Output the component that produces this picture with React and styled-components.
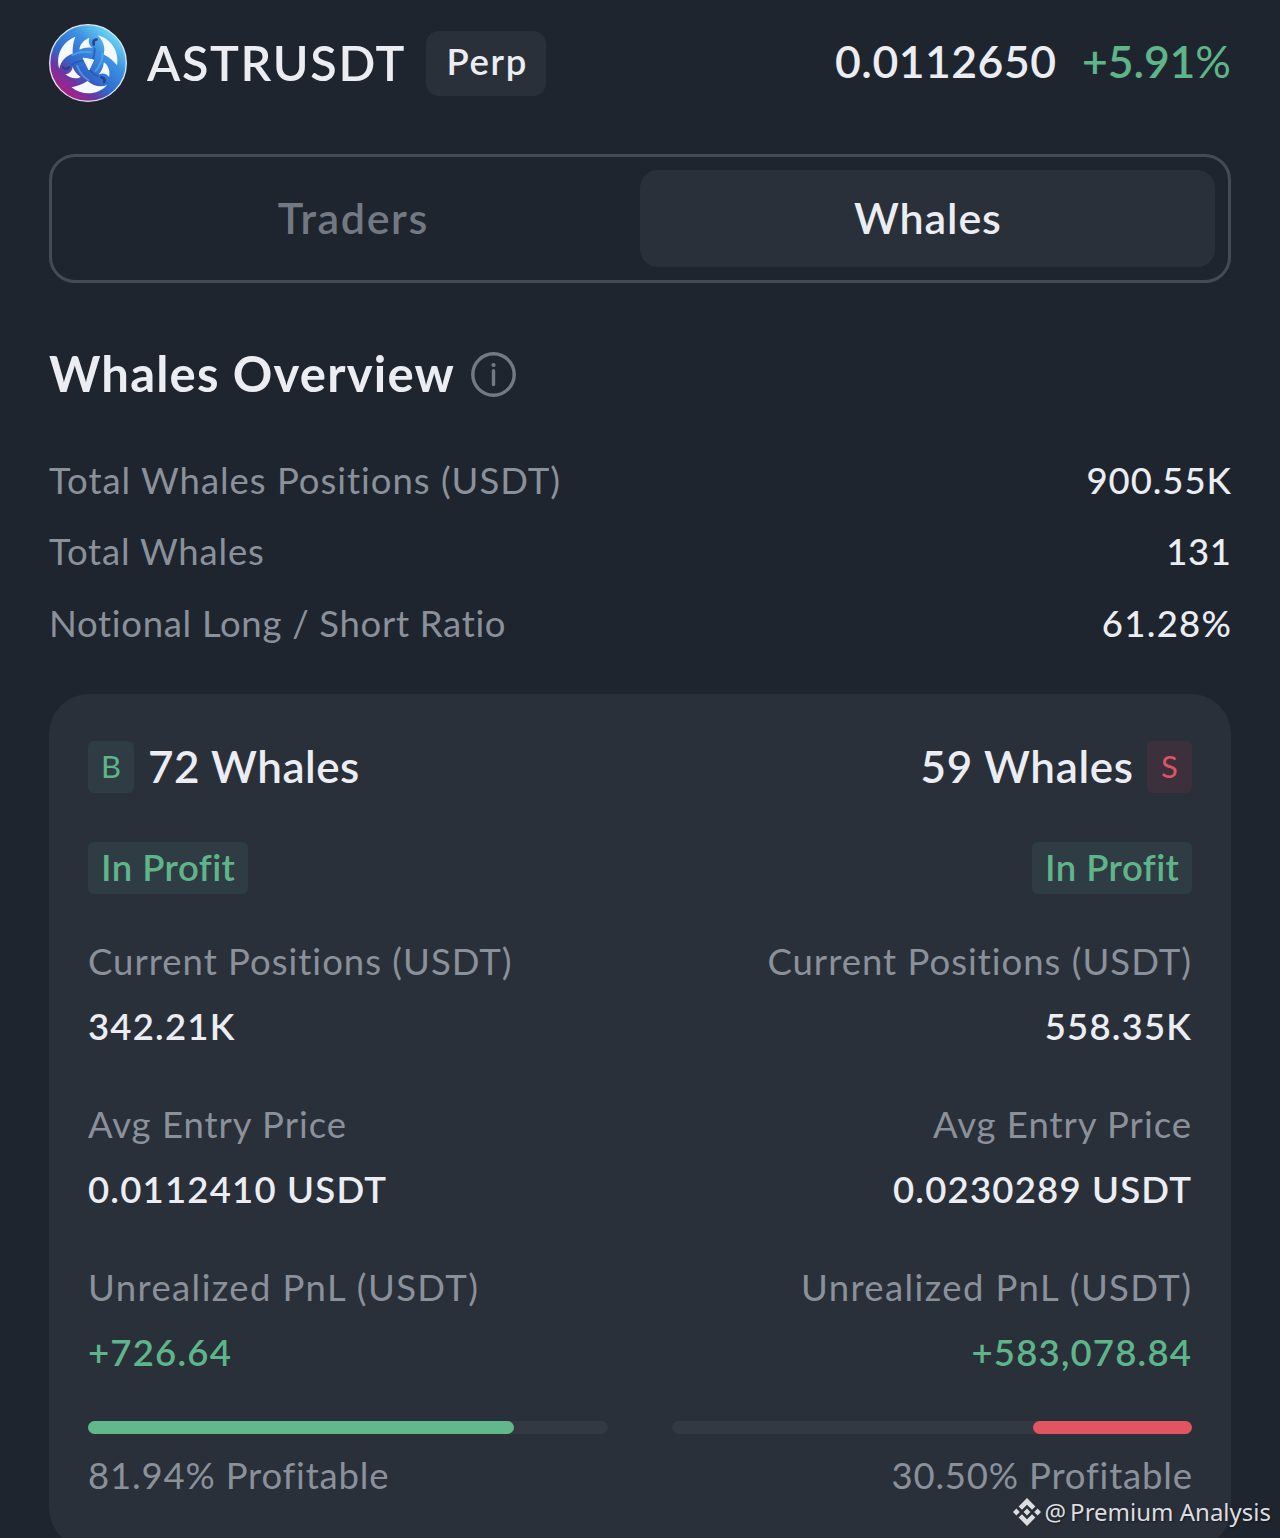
import React from 'react';
import styled, { createGlobalStyle } from 'styled-components';

const overview = [
  { label: 'Total Whales Positions (USDT)', labelSpacing: 0.97, value: '900.55K', spacing: 0.95 },
  { label: 'Total Whales', labelSpacing: 0.8, value: '131', spacing: 0.6 },
  { label: 'Notional Long / Short Ratio', labelSpacing: 0.69, value: '61.28%', spacing: 1.3 },
];

const buyers = {
  badge: 'B',
  count: '72 Whales',
  spacing: 0.5,
  profitable: 81.94,
  stats: [
    { label: 'Current Positions (USDT)', labelSpacing: 1, value: '342.21K' },
    { label: 'Avg Entry Price', labelSpacing: 0.98, value: '0.0112410 USDT' },
    { label: 'Unrealized PnL (USDT)', labelSpacing: 1.4, value: '+726.64', up: true },
  ],
};

const sellers = {
  badge: 'S',
  count: '59 Whales',
  spacing: 0.65,
  profitable: 30.5,
  stats: [
    { label: 'Current Positions (USDT)', labelSpacing: 1, value: '558.35K' },
    { label: 'Avg Entry Price', labelSpacing: 0.98, value: '0.0230289 USDT' },
    { label: 'Unrealized PnL (USDT)', labelSpacing: 1.4, value: '+583,078.84', up: true },
  ],
};

const Coin = () => (
  <CoinIcon viewBox='28 28 234 234'>
    <defs>
      <linearGradient id='ring' x1='70' y1='240' x2='220' y2='60' gradientUnits='userSpaceOnUse'>
        <stop offset='0' stopColor='#b81a80' />
        <stop offset='0.22' stopColor='#6d35a0' />
        <stop offset='0.4' stopColor='#2f68cb' />
        <stop offset='0.72' stopColor='#3d90e2' />
        <stop offset='1' stopColor='#6bd5f3' />
      </linearGradient>
    </defs>
    <circle cx='145' cy='145' r='115' fill='url(#ring)' stroke='#dfe8f4' strokeWidth='4' />
    {/* one third of the knot, turned around the centre */}
    {[0, 120, 240].map((angle) => (
      <g key={angle} transform={`rotate(${angle} 145 145)`}>
        <path d='M107 66 C70 80 46 120 59 162 C62 142 76 124 99 117 C98 98 101 82 107 66 Z' fill='#f5f8ff' />
        <path d='M99 156 C103 168 110 178 123 187 C112 194 92 192 77 179 C90 177 98 168 99 156 Z' fill='#f5f8ff' />
        <path d='M99 121 Q124 107 154 113' fill='none' stroke='#5ab6f1' strokeWidth='6' strokeLinecap='round' opacity='0.6' />
        <path d='M97 150 Q112 139 131 138' fill='none' stroke='#2450a8' strokeWidth='5' strokeLinecap='round' opacity='0.7' />
        <path d='M71 158 Q77 168 88 158' fill='none' stroke='#28428f' strokeWidth='8' strokeLinecap='round' />
      </g>
    ))}
    <path d='M130 130 L162 136 L148 166 Z' fill='#f5f8ff' stroke='#f5f8ff' strokeWidth='3' strokeLinejoin='round' />
  </CoinIcon>
);

const Side = ({ data, right }) => (
  <Column $right={right}>
    <SideHead $right={right}>
      <Badge $sell={right}>{data.badge}</Badge>
      <Count $ls={data.spacing}>{data.count}</Count>
    </SideHead>
    <ProfitTag>
      <Text $ls={0.45}>In Profit</Text>
    </ProfitTag>
    {data.stats.map((stat) => (
      <Stat key={stat.label} $right={right}>
        <StatLabel $ls={stat.labelSpacing}>{stat.label}</StatLabel>
        <StatValue $ls={1.2} $up={stat.up}>{stat.value}</StatValue>
      </Stat>
    ))}
    <Track $right={right}>
      <Fill $sell={right} style={{ width: `${data.profitable}%` }} />
    </Track>
    <Profitable $ls={0.82}>{data.profitable.toFixed(2)}% Profitable</Profitable>
  </Column>
);

const App = () => {
  return (
    <Page>
      <GlobalStyle />
      <Header>
        <Coin />
        <Symbol $ls={1.65}>ASTRUSDT</Symbol>
        <Perp>
          <Text $ls={1.7}>Perp</Text>
        </Perp>
        <Price $ls={0.5}>0.0112650</Price>
        <Change $ls={-0.1}>+5.91<span>%</span></Change>
      </Header>
      <Tabs>
        <Tab>
          <Text $ls={1.6}>Traders</Text>
        </Tab>
        <Tab $active>
          <Text $ls={0.88}>Whales</Text>
        </Tab>
      </Tabs>
      <TitleRow>
        <Title $ls={1.2}>Whales Overview</Title>
        <InfoIcon viewBox='0 0 45 45'>
          <circle cx='22.5' cy='22.5' r='20.7' fill='none' stroke='#747a84' strokeWidth='3.4' />
          <circle cx='22.5' cy='13' r='2.1' fill='#747a84' />
          <path d='M22.5 18.8 V32.5' stroke='#747a84' strokeWidth='3.4' strokeLinecap='round' />
        </InfoIcon>
      </TitleRow>
      {overview.map((row) => (
        <Row key={row.label}>
          <RowLabel $ls={row.labelSpacing}>{row.label}</RowLabel>
          <RowValue $ls={row.spacing}>{row.value}</RowValue>
        </Row>
      ))}
      <Card>
        <Side data={buyers} />
        <Side data={sellers} right />
      </Card>
      <Watermark>
        <svg width='28' height='28' viewBox='0 0 28 28' fill='#dcdde0'>
          <path d='M14 0 L22.4 8.4 L19 11.8 L14 6.8 L9 11.8 L5.6 8.4 Z' />
          <path d='M14 28 L22.4 19.6 L19 16.2 L14 21.2 L9 16.2 L5.6 19.6 Z' />
          <path d='M3.4 10.6 L6.8 14 L3.4 17.4 L0 14 Z M24.6 10.6 L28 14 L24.6 17.4 L21.2 14 Z M14 10.6 L17.4 14 L14 17.4 L10.6 14 Z' />
        </svg>
        <span>@</span>
        <span>Premium Analysis</span>
      </Watermark>
    </Page>
  );
};

export default App;

const GlobalStyle = createGlobalStyle`
  * {
    box-sizing: border-box;
  }
  body {
    margin: 0;
    background-color: #1f252f;
  }
`;

const Page = styled.div`
  position: relative;
  width: 1280px;
  height: 1538px;
  padding: 24px 49px 0;
  overflow: hidden;
  background-color: #1f252f;
  color: #ebedf3;
  font-family: Lato, 'Open Sans', sans-serif;
  font-size: 36.5px;
  font-variant-ligatures: none;
  white-space: nowrap;
`;

const Text = styled.span`
  letter-spacing: ${(p) => p.$ls}px;
  margin-right: ${(p) => -p.$ls}px;
`;

const Header = styled.div`
  display: flex;
  align-items: center;
  height: 78px;
  margin-bottom: 52px;
`;

const CoinIcon = styled.svg`
  width: 78px;
  height: 78px;
  margin-right: 20px;
`;

const Symbol = styled(Text)`
  padding-bottom: 3px;
  font-size: 48.5px;
  font-weight: 600;
`;

const Perp = styled.div`
  display: flex;
  align-items: center;
  justify-content: center;
  width: 120px;
  height: 65px;
  margin-left: 22px;
  padding-bottom: 4px;
  border-radius: 13px;
  background-color: #2a303a;
  font-weight: 600;
`;

const Price = styled(Text)`
  margin-left: auto;
  padding-bottom: 5px;
  font-size: 44.5px;
  font-weight: 600;
`;

const Change = styled(Text)`
  margin-left: 26px;
  padding-bottom: 5px;
  color: #5fb58a;
  font-size: 44.5px;
  font-weight: 600;
  span {
    font-weight: 400;
  }
`;

const Tabs = styled.div`
  display: flex;
  height: 129px;
  padding: 13px;
  border: 3px solid #444b56;
  border-radius: 26px;
`;

const Tab = styled.div`
  display: flex;
  flex: 1;
  align-items: center;
  justify-content: center;
  padding-bottom: 3px;
  border-radius: 18px;
  background-color: ${(p) => (p.$active ? '#2a303a' : 'transparent')};
  color: ${(p) => (p.$active ? '#ebedf3' : '#737983')};
  font-size: 43px;
  font-weight: 600;
`;

const TitleRow = styled.div`
  display: flex;
  align-items: center;
  height: 61px;
  margin: 61px 0 39px;
`;

const Title = styled(Text)`
  padding-bottom: 3px;
  font-size: 49px;
  font-weight: 700;
`;

const InfoIcon = styled.svg`
  width: 45px;
  height: 45px;
  margin-left: 17px;
`;

const Row = styled.div`
  display: flex;
  align-items: center;
  justify-content: space-between;
  height: 71.6px;
`;

const RowLabel = styled(Text)`
  color: #8b919b;
`;

const RowValue = styled(Text)`
  font-weight: 500;
`;

const Card = styled.div`
  display: flex;
  justify-content: space-between;
  height: 854px;
  margin-top: 35px;
  padding: 47px 39px 0;
  border-radius: 40px;
  background-color: #2a303a;
`;

const Column = styled.div`
  display: flex;
  flex-direction: column;
  align-items: ${(p) => (p.$right ? 'flex-end' : 'flex-start')};
  width: 520px;
`;

const SideHead = styled.div`
  display: flex;
  flex-direction: ${(p) => (p.$right ? 'row-reverse' : 'row')};
  align-items: center;
  gap: 14px;
  height: 52px;
`;

const Badge = styled.div`
  width: ${(p) => (p.$sell ? 45 : 46)}px;
  height: 52px;
  border-radius: 6px;
  background-color: ${(p) => (p.$sell ? '#3c303c' : '#2f3c43')};
  color: ${(p) => (p.$sell ? '#dc5562' : '#5fb58a')};
  font-size: 31px;
  line-height: 51px;
  text-align: center;
`;

const Count = styled(Text)`
  padding-bottom: 1px;
  font-size: 44px;
  font-weight: 600;
`;

const ProfitTag = styled.div`
  display: flex;
  align-items: center;
  justify-content: center;
  width: 160px;
  height: 52px;
  margin: 49px 0 35px;
  padding-bottom: 2px;
  border-radius: 6px;
  background-color: #2f3c43;
  color: #5fb58a;
  font-weight: 600;
`;

const Stat = styled.div`
  display: flex;
  flex-direction: column;
  align-items: inherit;
  margin-bottom: 33px;
  padding-right: ${(p) => (p.$right ? 1 : 0)}px;
  line-height: 65px;
`;

const StatLabel = styled(Text)`
  color: #8b919b;
`;

const StatValue = styled(Text)`
  color: ${(p) => (p.$up ? '#5fb58a' : '#ebedf3')};
  font-weight: 600;
`;

const Track = styled.div`
  display: flex;
  justify-content: ${(p) => (p.$right ? 'flex-end' : 'flex-start')};
  width: 520px;
  height: 13px;
  margin: 3px 0 16px;
  border-radius: 7px;
  background-color: #323943;
`;

const Fill = styled.div`
  height: 13px;
  border-radius: 7px;
  background-color: ${(p) => (p.$sell ? '#e15561' : '#62b78c')};
`;

const Profitable = styled(Text)`
  color: #8b919b;
  line-height: 50px;
`;

const Watermark = styled.div`
  position: absolute;
  right: 9px;
  bottom: 8px;
  display: flex;
  align-items: center;
  color: #dcdde0;
  font-family: 'Noto Sans', 'Open Sans', sans-serif;
  font-size: 24px;
  line-height: 36px;
  text-shadow: 1px 1px 2px rgba(0, 0, 0, 0.5);
  span {
    margin-left: 4px;
  }
`;
